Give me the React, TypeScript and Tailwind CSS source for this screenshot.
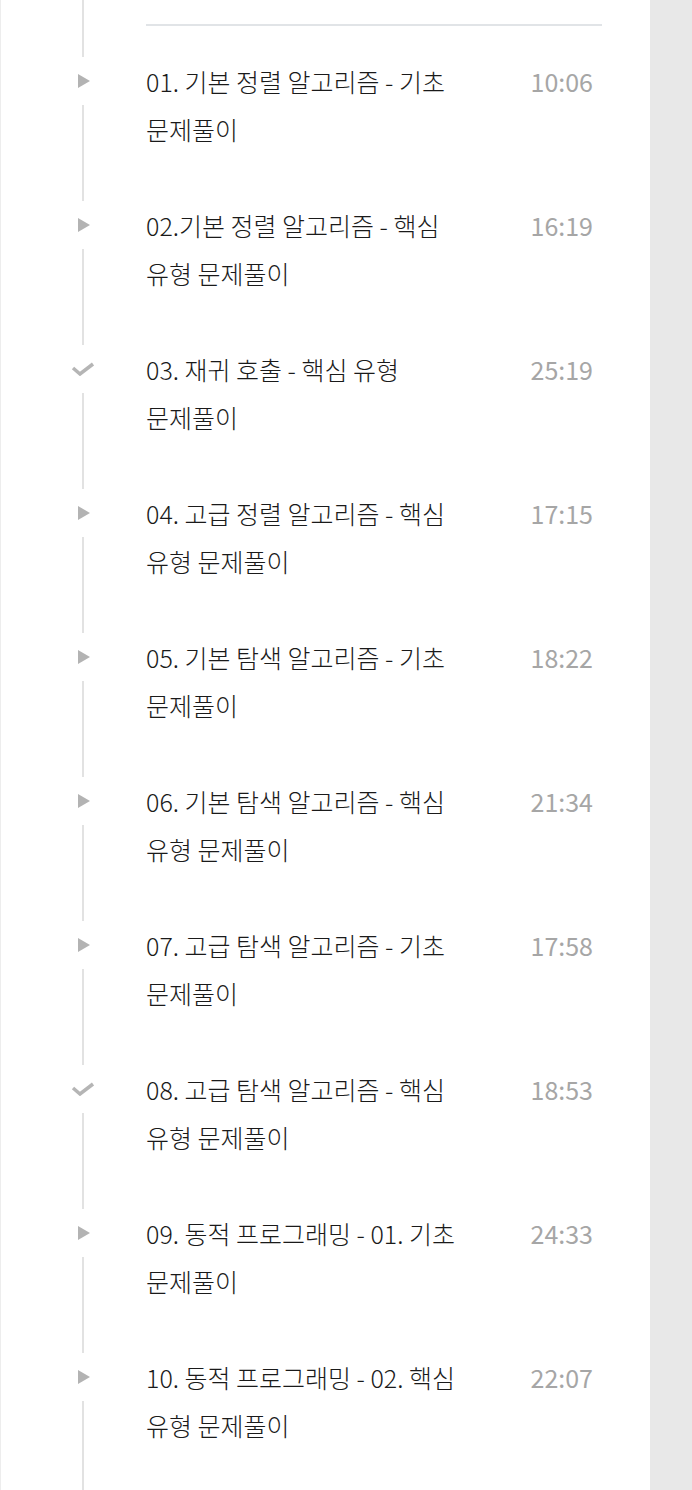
import React from "react";

type Item = { title: string; time: string; done?: boolean };

const items: Item[] = [
  { title: "01. 기본 정렬 알고리즘 - 기초 문제풀이", time: "10:06" },
  { title: "02.기본 정렬 알고리즘 - 핵심 유형 문제풀이", time: "16:19" },
  { title: "03. 재귀 호출 - 핵심 유형 문제풀이", time: "25:19", done: true },
  { title: "04. 고급 정렬 알고리즘 - 핵심 유형 문제풀이", time: "17:15" },
  { title: "05. 기본 탐색 알고리즘 - 기초 문제풀이", time: "18:22" },
  { title: "06. 기본 탐색 알고리즘 - 핵심 유형 문제풀이", time: "21:34" },
  { title: "07. 고급 탐색 알고리즘 - 기초 문제풀이", time: "17:58" },
  { title: "08. 고급 탐색 알고리즘 - 핵심 유형 문제풀이", time: "18:53", done: true },
  { title: "09. 동적 프로그래밍 - 01. 기초 문제풀이", time: "24:33" },
  { title: "10. 동적 프로그래밍 - 02. 핵심 유형 문제풀이", time: "22:07" },
];

function Play() {
  return (
    <svg width="12" height="14" viewBox="0 0 12 14">
      <polygon points="0,0 12,7 0,14" fill="#b3b3b3" />
    </svg>
  );
}

function Check() {
  return (
    <svg width="24" height="14" viewBox="0 0 24 14">
      <polyline
        points="2,6 9,12 22,2"
        fill="none"
        stroke="#b5b5b5"
        strokeWidth="3.5"
        strokeLinejoin="miter"
      />
    </svg>
  );
}

export default function App() {
  return (
    <div
      className="flex w-[692px] h-[1490px] overflow-hidden bg-[#e8e8e8]"
      style={{ fontFamily: '"Noto Sans CJK KR", "Noto Sans", sans-serif' }}
    >
      <div className="w-[650px] h-full bg-white border-l border-[#ededed] flex flex-col">
        <div className="flex h-[33px] shrink-0">
          <div className="w-[145px] shrink-0 flex">
            <div className="ml-[70px] w-[24px] flex justify-center">
              <div className="w-[2px] h-full bg-[#e2e2e2]" />
            </div>
          </div>
          <div className="flex-1 pr-[48px] pt-[24px]">
            <div className="h-[2px] bg-[#e1e4e7]" />
          </div>
        </div>
        {items.map((it, i) => (
          <div key={i} className="flex h-[144px] shrink-0">
            <div className="w-[145px] shrink-0 flex">
              <div className="ml-[70px] w-[24px] flex flex-col items-center">
                <div className="w-[2px] h-[24px] bg-[#e2e2e2]" />
                <div className="h-[48px] w-[24px] flex items-center justify-center">
                  {it.done ? <Check /> : <span className="ml-[2px] flex"><Play /></span>}
                </div>
                <div className="w-[2px] flex-1 bg-[#e2e2e2]" />
              </div>
            </div>
            <div className="flex-1 flex pt-[24px] pr-[57px]">
              <div className="w-[340px] text-[25px] font-light leading-[48px] text-[#1a1a1a] break-keep">
                {it.title}
              </div>
              <div className="flex-1 text-right text-[25px] font-normal leading-[48px] text-[#a6a6a6]">
                {it.time}
              </div>
            </div>
          </div>
        ))}
        <div className="flex flex-1">
          <div className="w-[145px] shrink-0 flex">
            <div className="ml-[70px] w-[24px] flex justify-center">
              <div className="w-[2px] h-full bg-[#e2e2e2]" />
            </div>
          </div>
        </div>
      </div>
    </div>
  );
}
